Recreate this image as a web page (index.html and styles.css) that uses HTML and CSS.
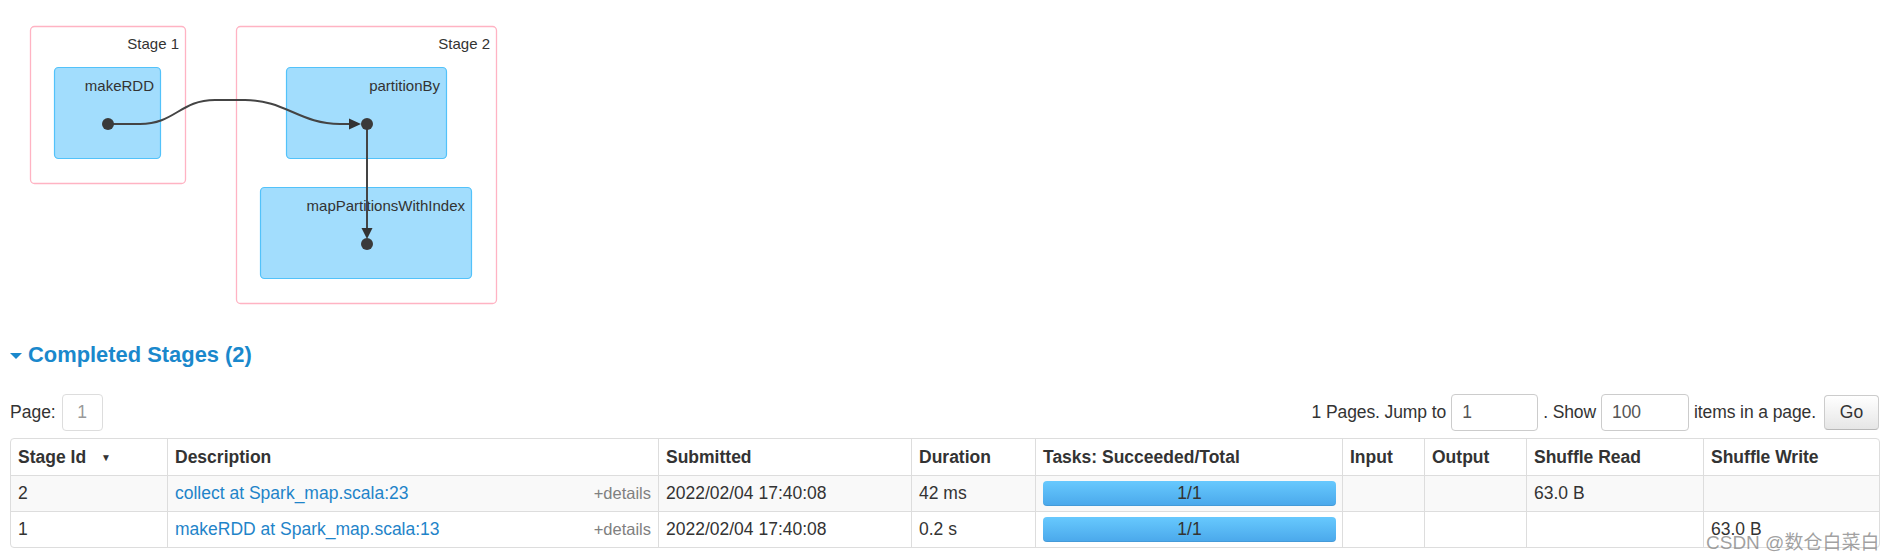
FILE: index.html
```html
<!DOCTYPE html>
<html>
<head>
<meta charset="utf-8">
<title>Stages</title>
<link rel="stylesheet" href="styles.css">
</head>
<body>
<svg class="dag" width="520" height="320" viewBox="0 0 520 320">
  <rect class="cluster" x="30.5" y="26.5" width="155" height="157" rx="4"/>
  <rect class="cluster" x="236.5" y="26.5" width="260" height="277" rx="4"/>
  <text class="lbl" x="179" y="49">Stage 1</text>
  <text class="lbl" x="490" y="49">Stage 2</text>
  <rect class="node" x="54.5" y="67.5" width="106" height="91" rx="4"/>
  <rect class="node" x="286.5" y="67.5" width="160" height="91" rx="4"/>
  <rect class="node" x="260.5" y="187.5" width="211" height="91" rx="4"/>
  <text class="lbl" x="154" y="91">makeRDD</text>
  <text class="lbl" x="440" y="91">partitionBy</text>
  <text class="lbl" x="465" y="211">mapPartitionsWithIndex</text>
  <path class="edge" d="M108,124 L140,124 C175,124 180,100 215,100 L245,100 C285,100 300,124 340,124 L350,124"/>
  <polygon class="head" points="349,118.5 361,124 349,129.5"/>
  <path class="edge" d="M367,124 L367,229"/>
  <polygon class="head" points="361.5,228 372.5,228 367,239"/>
  <circle class="dot" cx="108" cy="124" r="6"/>
  <circle class="dot" cx="367" cy="124" r="6"/>
  <circle class="dot" cx="367" cy="244" r="6"/>
</svg>

<div class="content">
  <h4 class="section-title"><span class="caret"></span><a href="#">Completed Stages (2)</a></h4>

  <div class="pager">
    <div class="pager-left">
      <span>Page:</span>
      <span class="page-box">1</span>
    </div>
    <div class="pager-right">
      <span>1 Pages. Jump to</span>
      <span class="field f-jump">1</span>
      <span>. Show</span>
      <span class="field f-show">100</span>
      <span>items in a page.</span>
      <span class="btn">Go</span>
    </div>
  </div>

  <table class="stages">
    <colgroup>
      <col class="c-id"><col class="c-desc"><col class="c-sub"><col class="c-dur"><col class="c-tasks"><col class="c-in"><col class="c-out"><col class="c-sr"><col class="c-sw">
    </colgroup>
    <thead>
      <tr>
        <th>Stage Id <span class="sort">&#9660;</span></th>
        <th>Description</th>
        <th>Submitted</th>
        <th>Duration</th>
        <th>Tasks: Succeeded/Total</th>
        <th>Input</th>
        <th>Output</th>
        <th>Shuffle Read</th>
        <th>Shuffle Write</th>
      </tr>
    </thead>
    <tbody>
      <tr class="odd">
        <td>2</td>
        <td><a href="#">collect at Spark_map.scala:23</a><span class="details">+details</span></td>
        <td>2022/02/04 17:40:08</td>
        <td>42 ms</td>
        <td class="prog"><div class="bar">1/1</div></td>
        <td></td>
        <td></td>
        <td>63.0 B</td>
        <td></td>
      </tr>
      <tr>
        <td>1</td>
        <td><a href="#">makeRDD at Spark_map.scala:13</a><span class="details">+details</span></td>
        <td>2022/02/04 17:40:08</td>
        <td>0.2 s</td>
        <td class="prog"><div class="bar">1/1</div></td>
        <td></td>
        <td></td>
        <td></td>
        <td>63.0 B</td>
      </tr>
    </tbody>
  </table>
</div>

<div class="watermark">CSDN @数仓白菜白</div>
</body>
</html>
```

FILE: styles.css
```css
html, body {
  margin: 0;
  padding: 0;
  background: #ffffff;
}

body {
  font-family: "Liberation Sans", Arial, "Noto Sans CJK SC", sans-serif;
  font-size: 17.5px;
  color: #333333;
  width: 1889px;
  height: 560px;
  position: relative;
  overflow: hidden;
}

a {
  color: #1f84c9;
  text-decoration: none;
}

/* DAG */
.dag {
  display: block;
}
.dag .cluster {
  fill: #ffffff;
  stroke: #ffb3c3;
  stroke-width: 1.3;
}
.dag .node {
  fill: #a2ddfd;
  stroke: #52c2fa;
  stroke-width: 1.2;
}
.dag .lbl {
  font-family: "Liberation Sans", Arial, sans-serif;
  font-size: 15px;
  fill: #333333;
  text-anchor: end;
}
.dag .edge {
  fill: none;
  stroke: #444444;
  stroke-width: 2;
}
.dag .head {
  fill: #333333;
}
.dag .dot {
  fill: #3a3a3a;
}

/* content */
.content {
  padding: 0 10px;
}

.section-title {
  margin: 20px 0 0;
  height: 30px;
  line-height: 30px;
  font-size: 21.9px;
  font-weight: bold;
  display: flex;
  align-items: center;
}
.section-title a {
  color: #1a88cc;
}
.caret {
  display: inline-block;
  width: 0;
  height: 0;
  border-left: 6.5px solid transparent;
  border-right: 6.5px solid transparent;
  border-top: 6px solid #1a88cc;
  margin-right: 6px;
  margin-top: 2px;
}

.pager {
  margin-top: 24px;
  height: 37px;
  display: flex;
  justify-content: space-between;
  align-items: center;
}
.pager-left,
.pager-right {
  display: flex;
  align-items: center;
}
.pager-left {
  gap: 6px;
}
.pager-right {
  gap: 5px;
  letter-spacing: -0.1px;
}
.page-box {
  box-sizing: border-box;
  width: 41px;
  height: 37px;
  border: 1px solid #dddddd;
  border-radius: 4px;
  color: #999999;
  text-align: center;
  line-height: 35px;
}
.field {
  box-sizing: border-box;
  height: 37px;
  border: 1px solid #cccccc;
  border-radius: 4px;
  color: #555555;
  padding-left: 10px;
  line-height: 35px;
}
.f-jump {
  width: 87px;
}
.f-show {
  width: 88px;
}
.btn {
  box-sizing: border-box;
  width: 55px;
  height: 35px;
  margin-left: 3px;
  border: 1px solid #cccccc;
  border-bottom-color: #b8b8b8;
  border-radius: 4px;
  background: linear-gradient(to bottom, #ffffff, #e6e6e6);
  text-align: center;
  line-height: 33px;
  color: #333333;
  letter-spacing: 0;
}

/* table */
.stages {
  margin-top: 7px;
  width: 1869px;
  table-layout: fixed;
  border-collapse: separate;
  border-spacing: 0;
  border: 1px solid #dddddd;
  border-radius: 4px;
}
.c-id { width: 156px; }
.c-desc { width: 491px; }
.c-sub { width: 253px; }
.c-dur { width: 124px; }
.c-tasks { width: 307px; }
.c-in { width: 82px; }
.c-out { width: 102px; }
.c-sr { width: 177px; }
.c-sw { width: 176px; }

.stages th,
.stages td {
  text-align: left;
  vertical-align: top;
  line-height: 21px;
  padding: 7px 7px;
  border-left: 1px solid #dddddd;
  white-space: nowrap;
  overflow: visible;
}
.stages th:first-child,
.stages td:first-child {
  border-left: none;
}
.stages th {
  padding-top: 8px;
  font-weight: bold;
}
.stages td {
  border-top: 1px solid #dddddd;
}
.stages tr.odd td {
  background: #f9f9f9;
}
.sort {
  font-size: 10px;
  margin-left: 10px;
  vertical-align: 2px;
}
.details {
  float: right;
  color: #808080;
  font-size: 16.5px;
}
.stages td.prog {
  padding: 5px 6px 5px 7px;
}
.bar {
  height: 25px;
  line-height: 25px;
  border-radius: 4px;
  background: linear-gradient(to bottom, #67c9fe, #4aa8eb);
  box-shadow: inset 0 -1px 0 rgba(0, 0, 0, 0.08);
  text-align: center;
  color: #333333;
}

.watermark {
  position: absolute;
  left: 1706px;
  top: 527px;
  font-size: 19px;
  color: rgba(130, 130, 130, 0.75);
  white-space: nowrap;
  font-family: "Liberation Sans", Arial, "Noto Sans CJK SC", sans-serif;
}
```
